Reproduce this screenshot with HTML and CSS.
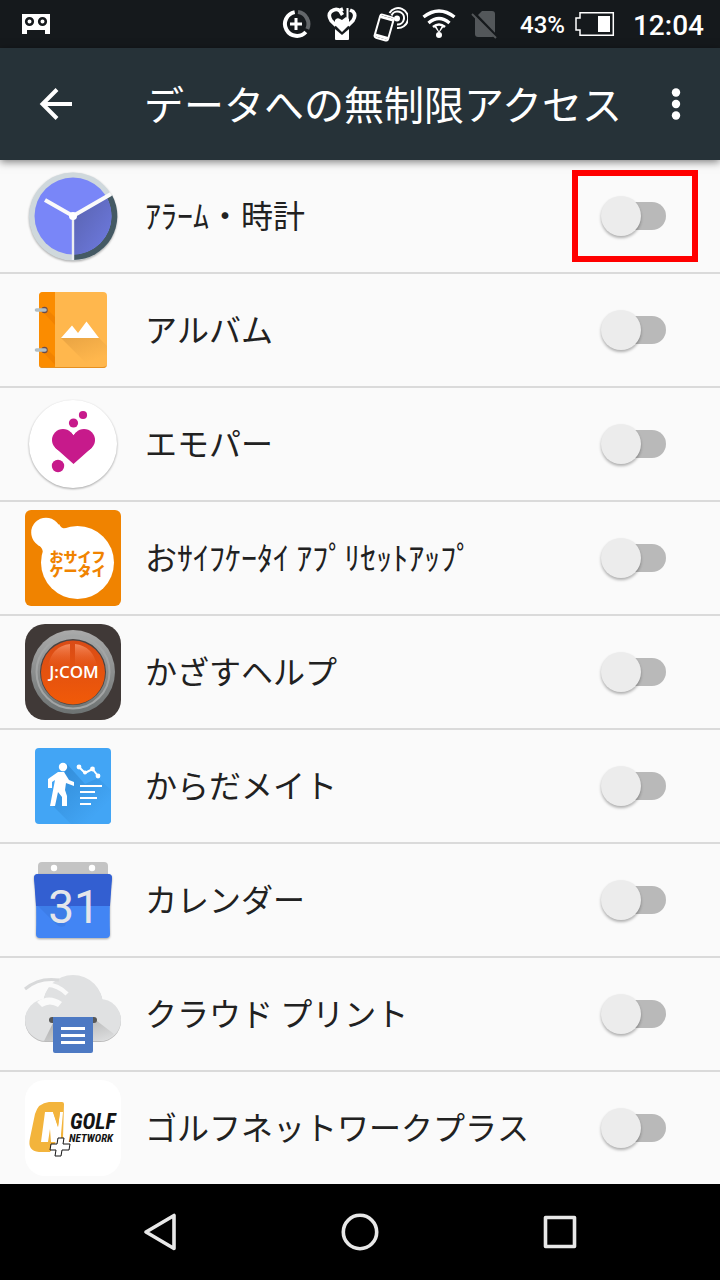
FILE: index.html
```html
<!DOCTYPE html>
<html lang="ja">
<head>
<meta charset="utf-8">
<meta name="viewport" content="width=device-width, initial-scale=1">
<title>データへの無制限アクセス</title>
<link rel="stylesheet" href="styles.css">
</head>
<body>
<div class="status-bar">
  <svg class="status-app" width="28" height="20" viewBox="0 0 28 20" aria-hidden="true">
    <path fill="#fff" d="M0 0h28v20h-5v-4H5v4H0z"/>
    <circle cx="7.500" cy="7.500" r="3.300" fill="none" stroke="#15191c" stroke-width="2.600"/>
    <circle cx="20.500" cy="7.500" r="3.300" fill="none" stroke="#15191c" stroke-width="2.600"/>
  </svg>
  <div class="status-icons">
    <svg width="30" height="36" viewBox="0 0 30 36" aria-hidden="true">
      <g fill="none" stroke="#fff" stroke-width="4">
        <path d="M12.700 6.100A12 12 0 1 0 23.800 26"/>
        <path stroke="#63676a" d="M16 6.100A12 12 0 0 1 25.300 23"/>
        <path stroke-width="3" d="M14 12v12M8 18h12"/>
      </g>
    </svg>
    <svg width="32" height="36" viewBox="-1 0 32 36" aria-hidden="true">
      <rect x="8" y="19" width="14" height="15" rx="1" fill="#fff"/>
      <path fill="#15191c" d="M5 17h20v3.500L15 29 5 20.500z"/>
      <path fill="#fff" d="M8 14q2-2.500 4-1.500l3 1.500 4-3 3 2v6l-7 7-7-7z"/>
      <path fill="none" stroke="#fff" stroke-width="3.600" d="M9 19.500L4 14.500Q.5 9 4 5.500 9 1.500 13 5l2.500 4M21 19.500l5-5q3.500-5.500 0-9l-3-1.500M12.500 4.500L16 3"/>
      <path stroke="#fff" stroke-width="2" d="M20.500 2v12"/>
    </svg>
    <svg width="36" height="36" viewBox="0 0 36 36" aria-hidden="true">
      <g fill="none" stroke="#fff" stroke-width="2">
        <path d="M17.500 7A10 10 0 1 1 25 22M19.500 9.500A6.500 6.500 0 1 1 25 18.500"/>
      </g>
      <circle cx="25" cy="12.500" r="3" fill="#fff"/>
      <g transform="rotate(16 12 22)"><rect x="5" y="9.500" width="14" height="24" rx="2" fill="#15191c" stroke="#fff" stroke-width="2"/><path d="M5.500 12h13M5.500 31h13" stroke="#fff" stroke-width="3"/></g>
    </svg>
    <svg width="34" height="36" viewBox="0 0 34 36" aria-hidden="true">
      <g fill="none" stroke="#fff" stroke-width="3.400">
        <path d="M1.500 11Q17-1 32.500 11M6.500 17Q17 8 27.500 17"/>
        <path stroke-width="2.600" d="M11 21q6-5 12 0"/>
      </g>
      <path fill="#fff" d="M11.500 19.500h2.500l3 6 3-6h2.500L17 27z"/>
      <circle cx="17" cy="29" r="3" fill="#fff"/>
    </svg>
    <svg width="36" height="36" viewBox="0 0 36 36" aria-hidden="true">
      <path fill="#53575a" d="M12 5h10q3 0 3 3v20q0 3-3 3H8q-3 0-3-3V12z"/>
      <path stroke="#15191c" stroke-width="3" d="M4 7l24 25"/>
      <path stroke="#53575a" stroke-width="2" d="M2 8l24 24"/>
    </svg>
  </div>
  <div class="battery">
    <span>43%</span>
    <svg width="40" height="24" viewBox="0 0 40 24" aria-hidden="true">
      <path fill="none" stroke="#fff" stroke-width="1.500" d="M5 .8h33.300v22.400H5V18H1V6h4z"/>
      <path fill="#fff" d="M23 4h12v16H23z"/>
    </svg>
  </div>
  <time class="clock">12:04</time>
</div>

<header class="app-bar">
  <button class="icon-button" type="button" aria-label="戻る">
    <svg width="48" height="48" viewBox="0 0 48 48"><path fill="none" stroke="#fff" stroke-width="4" d="M25 9.500L10.500 24 25 38.500M10.500 24H40"/></svg>
  </button>
  <h1 class="title">データへの無制限アクセス</h1>
  <button class="icon-button menu-button" type="button" aria-label="その他">
    <svg width="24" height="48" viewBox="0 0 24 48" fill="#fff"><circle cx="12" cy="12.500" r="4.200"/><circle cx="12" cy="24" r="4.200"/><circle cx="12" cy="35.500" r="4.200"/></svg>
  </button>
</header>

<main class="app-list">
  <label class="row highlighted">
    <svg class="app-icon" viewBox="0 0 96 96" aria-hidden="true">
      <defs><linearGradient id="clock-shade" x1="0" y1="0" x2="1" y2="1"><stop offset="0" stop-color="#5862ae"/><stop offset="1" stop-color="#6f7be2"/></linearGradient></defs>
      <circle class="drop" cx="48" cy="48.500" r="44" fill="#cfd8dc"/>
      <path fill="#455a64" d="M48 48L87 27A44 44 0 0 1 48.500 92z"/>
      <circle cx="48" cy="48" r="38.500" fill="#7986f8"/>
      <path fill="url(#clock-shade)" d="M48 48L82 30A38.500 38.500 0 0 1 48 86.500z"/>
      <path fill="none" stroke="#fafafa" stroke-width="4" d="M20 32l28 16 38-22"/>
      <path stroke="#eceff1" stroke-width="2.400" d="M48 48v44"/>
      <circle cx="48" cy="48" r="4" fill="#fff"/>
    </svg>
    <span class="name">ｱﾗｰﾑ・時計</span>
    <input class="switch" type="checkbox" role="switch">
  </label>
  <label class="row">
    <svg class="app-icon" viewBox="0 0 96 96" aria-hidden="true">
      <defs><linearGradient id="album-shade" x1="0" y1="0" x2=".6" y2="1"><stop offset="0" stop-color="#e9a443"/><stop offset=".9" stop-color="#ffb74d"/></linearGradient></defs>
      <rect x="14" y="10" width="68" height="76" rx="4" fill="#ffb74d"/>
      <path fill="#fb8c00" d="M18 10h12v76H18q-4 0-4-4V14q0-4 4-4z"/>
      <path fill="#f28300" d="M18 30l4-3 8 8v8zM18 70l4-3 8 8v8z"/>
      <path fill="#e69020" d="M14 82q0 4 4 4h60q4 0 4-4v1q-1 2-4 2H18q-3 0-4-2z"/>
      <path fill="url(#album-shade)" d="M36 56h38l8 8v16l-5 4H64z"/>
      <path fill="#fff" d="M36 56l11-12.500 6 7.500 8.500-11.500L74 56z"/>
      <g fill="#6b4c4c"><circle cx="19.500" cy="28" r="3.200"/><circle cx="19.500" cy="68" r="3.200"/></g>
      <path stroke="#b0bec5" stroke-width="3.600" stroke-linecap="round" d="M11.500 28H20M11.500 68H20"/>
    </svg>
    <span class="name">アルバム</span>
    <input class="switch" type="checkbox" role="switch">
  </label>
  <label class="row">
    <svg class="app-icon" viewBox="0 0 96 96" aria-hidden="true">
      <circle class="drop" cx="48" cy="48" r="44" fill="#fff"/>
      <g fill="#c71a8b"><circle cx="38" cy="44" r="11"/><circle cx="59" cy="44" r="11"/><path d="M45.800 36.200l2.700 3 2.700-3L67 51.500 48.500 68 30 51.500z"/>
      <circle cx="48.500" cy="27" r="4.600"/><circle cx="58" cy="19" r="4.100"/><circle cx="33" cy="70" r="6.200"/></g>
    </svg>
    <span class="name">エモパー</span>
    <input class="switch" type="checkbox" role="switch">
  </label>
  <label class="row">
    <svg class="app-icon" viewBox="0 0 96 96" aria-hidden="true">
      <rect width="96" height="96" rx="6" fill="#f08300"/>
      <g fill="#fff"><circle cx="52.500" cy="52.500" r="36.500"/><circle cx="21" cy="22.500" r="14.800"/><path d="M34 14q3 6 9 4L18 46q1-8-5-11z"/></g>
      <g class="wallet-logo" fill="#f08300"><text x="52.500" y="52">おサイフ</text><text x="52.500" y="66">ケータイ</text></g>
    </svg>
    <span class="name">おｻｲﾌｹｰﾀｲ ｱﾌﾟﾘｾｯﾄｱｯﾌﾟ</span>
    <input class="switch" type="checkbox" role="switch">
  </label>
  <label class="row">
    <svg class="app-icon" viewBox="0 0 96 96" aria-hidden="true">
      <defs>
        <linearGradient id="ring" x1="0" y1="0" x2="0" y2="1"><stop offset="0" stop-color="#aaa"/><stop offset="1" stop-color="#6d7272"/></linearGradient>
        <linearGradient id="button-face" x1="0" y1="0" x2="0" y2="1"><stop offset="0" stop-color="#d94b16"/><stop offset="1" stop-color="#f15a08"/></linearGradient>
        <linearGradient id="gloss" x1="0" y1="0" x2="0" y2="1"><stop offset="0" stop-color="#f58a5c"/><stop offset="1" stop-color="#e95516" stop-opacity="0"/></linearGradient>
      </defs>
      <rect width="96" height="96" rx="20" fill="#403937"/>
      <circle cx="48" cy="48" r="42" fill="url(#ring)"/>
      <circle cx="48" cy="48" r="36.500" fill="none" stroke="#a3a5a5" stroke-width="2"/>
      <circle cx="48" cy="48" r="33" fill="#494342"/>
      <circle cx="48" cy="48.500" r="32" fill="url(#button-face)"/>
      <path fill="url(#gloss)" d="M45 20v26L23 42q4-20 22-22zM50 20v26l22-4q-4-20-22-22z"/>
      <text class="jcom-logo" x="49" y="54" fill="#fff">J:COM</text>
    </svg>
    <span class="name">かざすヘルプ</span>
    <input class="switch" type="checkbox" role="switch">
  </label>
  <label class="row">
    <svg class="app-icon" viewBox="0 0 96 96" aria-hidden="true">
      <defs><linearGradient id="walk-shade" x1="0" y1="0" x2="1" y2="1"><stop offset=".2" stop-color="#3590dc"/><stop offset=".8" stop-color="#42a5f5"/></linearGradient></defs>
      <rect x="10" y="10" width="76" height="76" rx="4" fill="#42a5f5"/>
      <path fill="url(#walk-shade)" d="M42 26l18 20 13-6 13 12v30q0 4-4 4H46L25 65l12-20z"/>
      <g fill="#fff"><circle cx="38" cy="29" r="4.200"/>
      <path d="M33 34h6l5 8 5 2v4l-8-3-1 7 2 6v10h-5v-9l-4-5-3 14h-5l5-26-3 2v6h-4v-9z"/>
      <circle cx="54" cy="29" r="2.400"/><circle cx="60" cy="34.500" r="2"/><circle cx="67.500" cy="31" r="2.400"/><circle cx="73" cy="38" r="2.400"/></g>
      <path fill="none" stroke="#fff" stroke-width="2" d="M54 29l6 6 7.500-4 5.500 7M55 48h22M55 54h15M55 60h17M55 66h11"/>
    </svg>
    <span class="name">からだメイト</span>
    <input class="switch" type="checkbox" role="switch">
  </label>
  <label class="row">
    <svg class="app-icon" viewBox="0 0 96 96" aria-hidden="true">
      <path fill="#c4c4c4" d="M17 10h62q4 0 4 4v14H13V14q0-4 4-4z"/>
      <circle cx="29" cy="16" r="3.200" fill="#fff"/><circle cx="67" cy="16" r="3.200" fill="#fff"/>
      <path class="drop" fill="#4285f4" d="M13 22h70q4 0 4 4-3 18-2 56 0 4-4 4H15q-4 0-4-4 1-38-2-56 0-4 4-4z"/>
      <path fill="#335fd1" d="M13 22h70q4 0 4 4l-2 28H11L9 26q0-4 4-4z"/>
      <path fill="#3d7de8" d="M13 54h33L40 74q-5 2-8-1z"/>
      <text class="calendar-day" x="49" y="71" fill="#e4e6ea">31</text>
    </svg>
    <span class="name">カレンダー</span>
    <input class="switch" type="checkbox" role="switch">
  </label>
  <label class="row">
    <svg class="app-icon" viewBox="0 0 96 96" aria-hidden="true">
      <defs><linearGradient id="cloud-shade" x1="0" y1="0" x2="1" y2="1"><stop offset="0" stop-color="#aaa"/><stop offset="1" stop-color="#e0e1e2"/></linearGradient></defs>
      <g class="drop-soft" fill="#e0e1e2"><circle cx="48" cy="39" r="30"/><circle cx="21" cy="54" r="21"/><circle cx="75" cy="54" r="21"/><rect x="20" y="50" width="56" height="25"/></g>
      <path fill="url(#cloud-shade)" d="M67 55h5l17 13q-5 7-16 7h-6zM28 57v18h-9z"/>
      <path fill="none" stroke="#fafafa" stroke-width="4.500" d="M2 27Q24 10 42 28"/>
      <path fill="none" stroke="#d8d9da" stroke-width="3" d="M0 23Q14 11 34 14"/>
      <path fill="#fafafa" d="M12 36q12-9 25 0l-4 5q-8-5-16 0z"/>
      <rect x="24" y="51" width="48" height="6" rx="3" fill="#575757"/>
      <path fill="#4d79c3" d="M28 51h40v34q0 2-2 2H30q-2 0-2-2z"/>
      <path stroke="#fff" stroke-width="3" d="M36 62.500h24M36 69.500h24M36 76.500h24"/>
    </svg>
    <span class="name">クラウド プリント</span>
    <input class="switch" type="checkbox" role="switch">
  </label>
  <label class="row">
    <svg class="app-icon" viewBox="0 0 96 96" aria-hidden="true">
      <rect width="96" height="96" rx="20" fill="#fff"/>
      <path fill="#f3b43c" d="M37 22H24Q13 23 10 34L5 58q-3 13 9 14h11l8-14h5l1-34q0-2-2-2z"/>
      <path fill="#fff" d="M20 32h8l5 15 2-15h3l-2 22v8H26l-1-13-2 13h-7z"/>
      <path fill="#f3b43c" d="M28 32h7l-2 15z"/>
      <path fill="#fff" stroke="#151515" d="M33 58h6l-1 6h7l-1 6h-7l-1 6h-6l1-6h-6l1-6h6z"/>
      <g class="golf-logo" fill="#141414"><text class="golf-large" x="45" y="49">GOLF</text><text class="golf-small" x="44" y="62">NETWORK</text></g>
    </svg>
    <span class="name">ゴルフネットワークプラス</span>
    <input class="switch" type="checkbox" role="switch">
  </label>
</main>

<nav class="nav-bar" aria-label="ナビゲーション">
  <button class="nav-button" type="button" aria-label="戻る"><svg width="40" height="40" viewBox="0 0 40 40"><path d="M34 3.500v33L6 20z"/></svg></button>
  <button class="nav-button" type="button" aria-label="ホーム"><svg width="40" height="40" viewBox="0 0 40 40"><circle cx="20" cy="20" r="16.700"/></svg></button>
  <button class="nav-button" type="button" aria-label="アプリ履歴"><svg width="40" height="40" viewBox="0 0 40 40"><path d="M5.500 5.500h29v29h-29z"/></svg></button>
</nav>
</body>
</html>
```
FILE: styles.css
```css
*, *::before, *::after { box-sizing: border-box; }

body {
  margin: 0;
  min-height: 100vh;
  display: flex;
  flex-direction: column;
  background: #fafafa;
  color: #212121;
  font-family: Roboto, "Noto Sans CJK JP", sans-serif;
}

svg { display: block; flex: none; }

button {
  border: 0;
  padding: 0;
  background: none;
  cursor: pointer;
}

.status-bar {
  display: flex;
  align-items: center;
  height: 48px;
  padding: 0 16px 0 22px;
  background: #15191c;
  color: #fff;
  font-weight: 500;
}

.status-app { margin-right: auto; }

.status-icons {
  display: flex;
  gap: 14px;
  margin-right: 14px;
}

.battery {
  display: flex;
  align-items: center;
  gap: 10px;
  margin-right: 18px;
  font-size: 24px;
}

.battery span { padding-top: 2px; }

.clock {
  padding-top: 2px;
  font-size: 28px;
}

.app-bar {
  position: relative;
  display: flex;
  align-items: center;
  height: 112px;
  padding: 0 32px;
  background: #263238;
  color: #fff;
  box-shadow: 0 2px 8px rgba(0, 0, 0, .5);
}

.title {
  flex: 1;
  margin: 0 0 0 64px;
  padding-bottom: 2px;
  font: 400 40px/56px "Noto Sans CJK JP", sans-serif;
  white-space: nowrap;
}

.app-list { flex: 1; }

.row {
  position: relative;
  display: flex;
  align-items: center;
  gap: 24px;
  height: 114px;
  padding: 0 54px 0 25px;
  border-bottom: 2px solid #dadada;
}

.row:last-child {
  height: 112px;
  border-bottom: 0;
}

.app-icon {
  width: 96px;
  height: 96px;
  overflow: visible;
}

.drop { filter: drop-shadow(0 1px 1px rgba(0, 0, 0, .35)); }
.drop-soft { filter: drop-shadow(0 1px 0 rgba(0, 0, 0, .25)); }

.name {
  flex: 1;
  padding-bottom: 4px;
  font: 400 32px/48px "Noto Sans CJK JP", sans-serif;
  font-kerning: none;
}

.switch {
  appearance: none;
  position: relative;
  flex: none;
  width: 66px;
  height: 40px;
  margin: 0;
  cursor: pointer;
}

.switch::before {
  content: "";
  position: absolute;
  inset: 6px 0 6px 6px;
  border-radius: 14px;
  background: #b9b9b9;
}

.switch::after {
  content: "";
  position: absolute;
  top: 0;
  left: 1px;
  width: 40px;
  height: 40px;
  border-radius: 50%;
  background: #ececec;
  box-shadow: 0 2px 3px rgba(0, 0, 0, .3);
}

.switch:checked::after { left: 26px; }

.highlighted::after {
  content: "";
  position: absolute;
  top: 10px;
  right: 22px;
  width: 126px;
  height: 92px;
  border: 6px solid #f00;
  pointer-events: none;
}

.wallet-logo {
  font: 900 14px "Noto Sans CJK JP", sans-serif;
  text-anchor: middle;
}

.jcom-logo {
  font: 600 17px "Open Sans", sans-serif;
  text-anchor: middle;
}

.calendar-day {
  font: 400 46px Roboto, sans-serif;
  text-anchor: middle;
}

.golf-logo { font-family: "Roboto Condensed", "Liberation Sans Narrow", Roboto, sans-serif; }
.golf-large { font-size: 22px; font-weight: 700; font-style: italic; }
.golf-small { font-size: 11px; font-weight: 700; font-style: italic; }

.nav-bar {
  display: flex;
  justify-content: center;
  height: 96px;
  background: #000;
}

.nav-button {
  display: grid;
  place-items: center;
  flex: 0 1 200px;
}

.nav-button svg {
  fill: none;
  stroke: #e8e8e8;
  stroke-width: 3.600;
  stroke-linejoin: round;
}
```
